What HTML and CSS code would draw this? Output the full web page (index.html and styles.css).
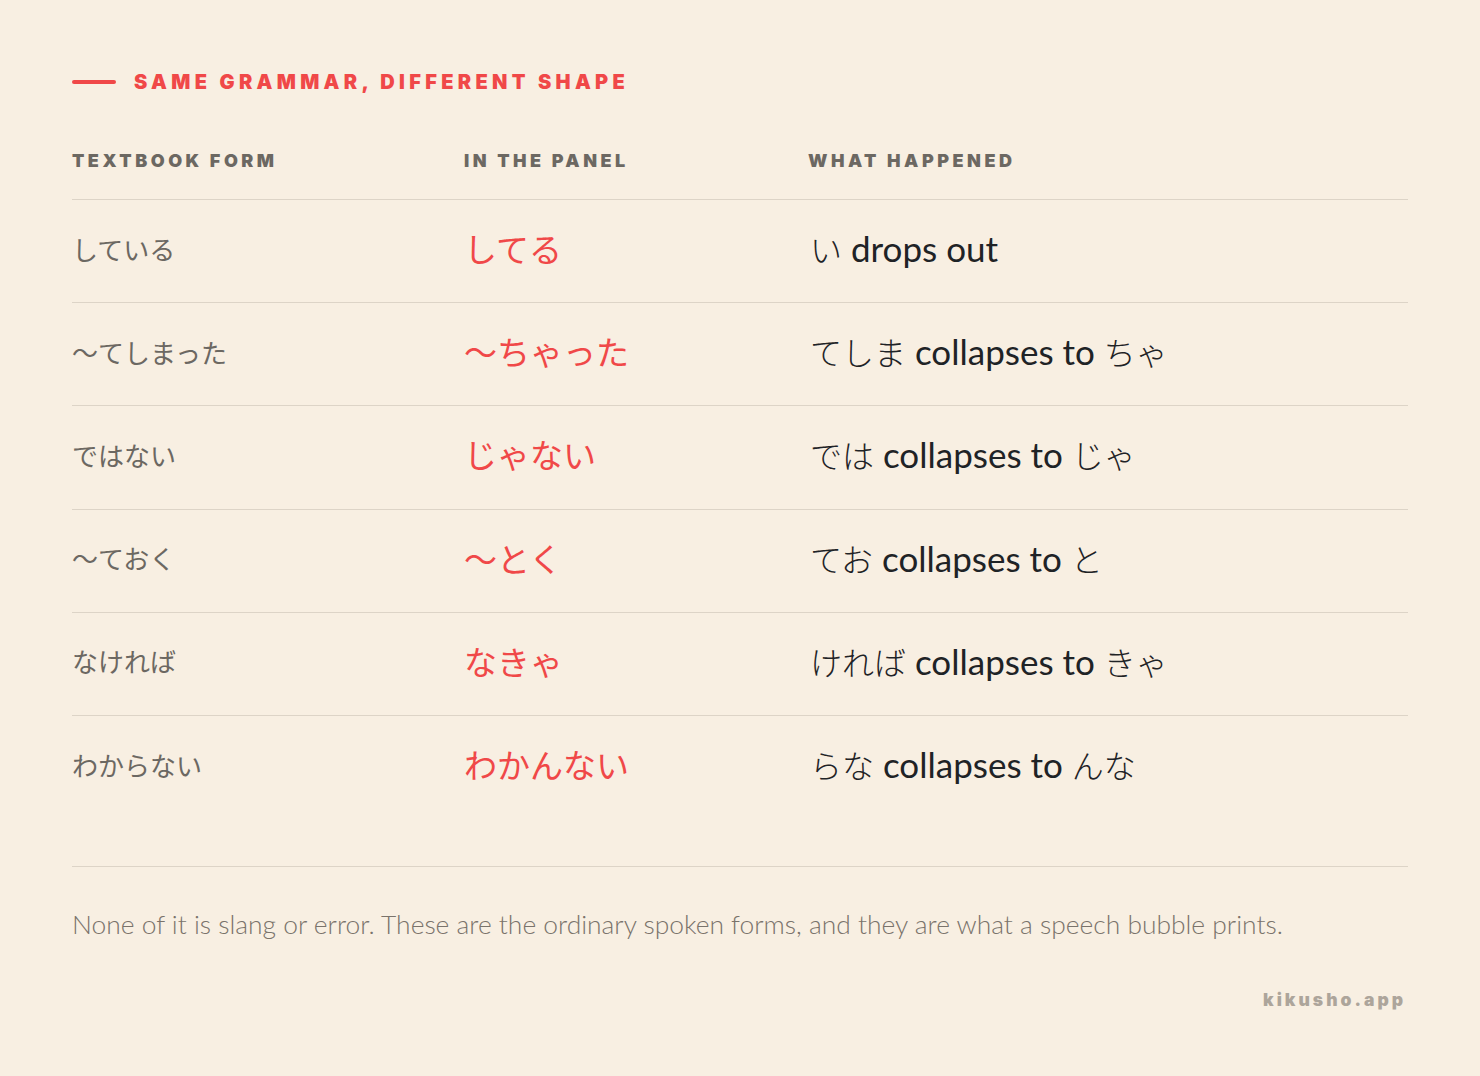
FILE: index.html
```html
<!DOCTYPE html>
<html lang="ja">
<head>
<meta charset="utf-8">
<title>Same grammar, different shape</title>
<link rel="stylesheet" href="styles.css">
</head>
<body>
<main class="page">
  <header class="eyebrow">
    <span class="eyebrow-rule"></span>
    <h1 class="eyebrow-title">SAME GRAMMAR, DIFFERENT SHAPE</h1>
  </header>

  <div class="table">
    <div class="row head">
      <div class="th">TEXTBOOK FORM</div>
      <div class="th">IN THE PANEL</div>
      <div class="th">WHAT HAPPENED</div>
    </div>
    <div class="row">
      <div class="textbook">している</div>
      <div class="panel">してる</div>
      <div class="what"><span class="kana">い</span> drops out</div>
    </div>
    <div class="row">
      <div class="textbook">〜てしまった</div>
      <div class="panel">〜ちゃった</div>
      <div class="what"><span class="kana">てしま</span> collapses to <span class="kana">ちゃ</span></div>
    </div>
    <div class="row">
      <div class="textbook">ではない</div>
      <div class="panel">じゃない</div>
      <div class="what"><span class="kana">では</span> collapses to <span class="kana">じゃ</span></div>
    </div>
    <div class="row">
      <div class="textbook">〜ておく</div>
      <div class="panel">〜とく</div>
      <div class="what"><span class="kana">てお</span> collapses to <span class="kana">と</span></div>
    </div>
    <div class="row">
      <div class="textbook">なければ</div>
      <div class="panel">なきゃ</div>
      <div class="what"><span class="kana">ければ</span> collapses to <span class="kana">きゃ</span></div>
    </div>
    <div class="row last">
      <div class="textbook">わからない</div>
      <div class="panel">わかんない</div>
      <div class="what"><span class="kana">らな</span> collapses to <span class="kana">んな</span></div>
    </div>
  </div>

  <footer class="foot">
    <p class="note">None of it is slang or error. These are the ordinary spoken forms, and they are what a speech bubble prints.</p>
    <div class="brand">kikusho.app</div>
  </footer>
</main>
</body>
</html>
```

FILE: styles.css
```css
html, body {
  margin: 0;
  padding: 0;
  background: #f8efe2;
}

.page {
  width: 1480px;
  height: 1076px;
  box-sizing: border-box;
  padding: 66px 72px 0 72px;
  font-family: "Lato", "Noto Sans CJK JP", sans-serif;
}

.eyebrow {
  display: flex;
  align-items: center;
  gap: 18px;
  height: 32px;
}

.eyebrow-rule {
  display: block;
  width: 44px;
  height: 4px;
  border-radius: 2px;
  background: #f04848;
}

.eyebrow-title {
  margin: 0;
  font-family: "Inter", sans-serif;
  font-weight: 900;
  font-size: 20px;
  letter-spacing: 4.3px;
  color: #f04848;
}

.table {
  margin-top: 52px;
}

.row {
  display: grid;
  grid-template-columns: 392px 344px 1fr;
  align-items: center;
  height: 102.2px;
  border-bottom: 1px solid #ddd4c7;
}

.row.head {
  height: 49px;
  align-items: start;
}

.row.last {
  border-bottom: none;
}

.th {
  font-family: "Inter", sans-serif;
  font-weight: 900;
  font-size: 18px;
  letter-spacing: 3.5px;
  color: #6c6862;
  line-height: 22px;
}

.textbook,
.panel,
.what {
  margin-bottom: 5px;
}

.textbook {
  font-family: "Noto Sans CJK JP", sans-serif;
  font-size: 26px;
  color: #6c6862;
  line-height: 1;
}

.panel {
  font-family: "Noto Sans CJK JP", sans-serif;
  font-size: 33px;
  color: #f04848;
  line-height: 1;
}

.what {
  font-family: "Lato", "Noto Sans CJK JP", sans-serif;
  font-weight: 400;
  font-size: 35px;
  color: #1f2326;
  line-height: 1;
  padding-left: 2px;
}

.kana {
  font-family: "Noto Sans CJK JP", sans-serif;
  font-size: 32px;
  font-weight: 300;
}

.foot {
  margin-top: 48px;
  border-top: 1px solid #ddd4c7;
}

.note {
  margin: 41px 0 0 0;
  font-family: "Lato", sans-serif;
  font-weight: 300;
  font-size: 26.4px;
  color: #7a736b;
  line-height: 32px;
}

.brand {
  margin-top: 49px;
  text-align: right;
  font-family: "Inter", sans-serif;
  font-weight: 900;
  font-size: 17.5px;
  letter-spacing: 3px;
  color: #ada59b;
  padding-right: 2px;
}
```
